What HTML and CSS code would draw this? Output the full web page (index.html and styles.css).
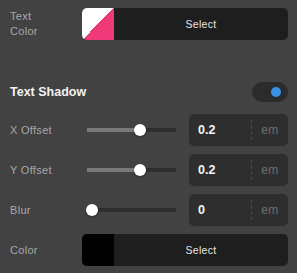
FILE: index.html
```html
<!DOCTYPE html>
<html lang="en">
<head>
<meta charset="UTF-8">
<meta name="viewport" content="width=device-width, initial-scale=1.0">
<title>Text Shadow</title>
<link rel="stylesheet" href="styles.css">
</head>
<body>

<div class="panel">
  <div class="row color-row">
    <div class="label">Text<br>Color</div>
    <div class="picker">
      <div class="swatch swatch-empty"></div>
      <div class="picker-btn">Select</div>
    </div>
  </div>

  <div class="section-head">
    <div class="section-title">Text Shadow</div>
    <div class="toggle"><span class="toggle-dot"></span></div>
  </div>

  <div class="row slider-row">
    <div class="label">X Offset</div>
    <div class="slider">
      <div class="track"><div class="fill" style="width: 53px"></div></div>
      <div class="thumb" style="left: 47px"></div>
    </div>
    <div class="num">
      <span class="num-value">0.2</span>
      <span class="num-unit">em</span>
    </div>
  </div>

  <div class="row slider-row">
    <div class="label">Y Offset</div>
    <div class="slider">
      <div class="track"><div class="fill" style="width: 53px"></div></div>
      <div class="thumb" style="left: 47px"></div>
    </div>
    <div class="num">
      <span class="num-value">0.2</span>
      <span class="num-unit">em</span>
    </div>
  </div>

  <div class="row slider-row">
    <div class="label">Blur</div>
    <div class="slider">
      <div class="track"><div class="fill" style="width: 0"></div></div>
      <div class="thumb" style="left: -1px"></div>
    </div>
    <div class="num">
      <span class="num-value">0</span>
      <span class="num-unit">em</span>
    </div>
  </div>

  <div class="row color-row">
    <div class="label">Color</div>
    <div class="picker">
      <div class="swatch swatch-black"></div>
      <div class="picker-btn">Select</div>
    </div>
  </div>
</div>

</body>
</html>
```

FILE: styles.css
```css
body {
  margin: 0;
  background-color: #424242;
  font-family: "Liberation Sans", Arial, sans-serif;
  color: #ababab;
}
.panel {
  padding: 8px 9px 0 10px;
}
.row {
  display: flex;
  align-items: center;
  height: 32px;
  margin-bottom: 8px;
}
.label {
  font-size: 11px;
  line-height: 15px;
  color: #a8a8a8;
  letter-spacing: 0.3px;
}
.color-row .label {
  width: 72px;
}
.slider-row .label {
  width: 77px;
}
.picker {
  flex: 1;
  display: flex;
  height: 32px;
  border-radius: 5px;
  overflow: hidden;
  background-color: #1e1e1e;
}
.swatch {
  width: 32px;
}
.swatch-empty {
  background: linear-gradient(to bottom right, #ffffff 50%, #ee3a78 50%);
}
.swatch-black {
  background-color: #000;
}
.picker-btn {
  flex: 1;
  display: flex;
  align-items: center;
  justify-content: center;
  font-size: 10.5px;
  color: #e6e6e6;
  letter-spacing: 0.3px;
}
.section-head {
  display: flex;
  justify-content: space-between;
  align-items: center;
  margin-top: 42px;
  margin-bottom: 12px;
  height: 20px;
}
.section-title {
  font-size: 12.5px;
  font-weight: bold;
  color: #f2f2f2;
}
.toggle {
  width: 36px;
  height: 20px;
  border-radius: 10px;
  background-color: #2b2b2b;
  position: relative;
}
.toggle-dot {
  position: absolute;
  top: 5px;
  right: 7px;
  width: 10px;
  height: 10px;
  border-radius: 50%;
  background-color: #3b90e8;
}
.slider {
  width: 89px;
  position: relative;
  height: 12px;
  margin-right: 13px;
  display: flex;
  align-items: center;
}
.track {
  width: 100%;
  height: 4px;
  background-color: #2e2e2e;
}
.fill {
  height: 100%;
  background-color: #7a7a7a;
}
.thumb {
  position: absolute;
  top: 0;
  width: 12px;
  height: 12px;
  border-radius: 50%;
  background-color: #ffffff;
  box-shadow: 0 1px 2px rgba(0,0,0,0.3);
}
.num {
  flex: 1;
  display: flex;
  align-items: center;
  height: 32px;
  border-radius: 5px;
  background-color: #2e2e2e;
}
.num-value {
  flex: 1;
  padding-left: 9px;
  font-size: 12.5px;
  font-weight: bold;
  color: #f5f5f5;
}
.num-unit {
  width: 36px;
  height: 20px;
  line-height: 20px;
  border-left: 1px dashed #4a4a4a;
  text-align: center;
  font-size: 12px;
  color: #707070;
  letter-spacing: 0.3px;
}
```
